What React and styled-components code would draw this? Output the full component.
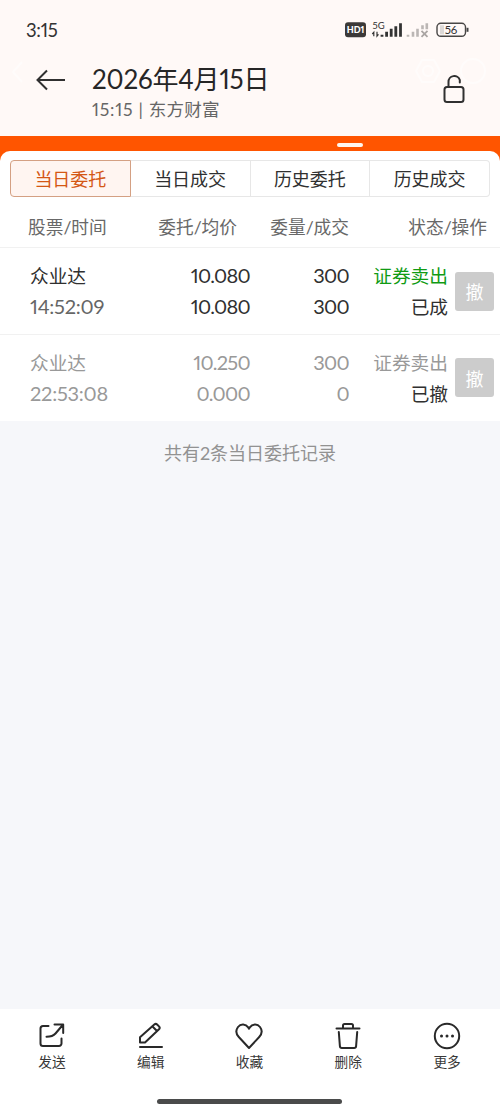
import React from 'react';
import styled, { createGlobalStyle } from 'styled-components';

const Global = createGlobalStyle`
  *{box-sizing:border-box}
  body{margin:0;background:#f6f7fa;font-family:Lato,"Noto Sans CJK SC",sans-serif;color:#303030;font-variant-numeric:proportional-nums}
`;
const Screen = styled.main`
  width:500px;height:1111px;display:flex;flex-direction:column;overflow:hidden;background:#f6f7fa;
`;
const Header = styled.header`
  height:136px;background:#fff9f7;flex:none;position:relative;
`;
const Ghost = styled.svg`position:absolute;left:0;top:0;`;
const Status = styled.div`
  position:relative;height:59px;padding:0 31px 0 26px;display:flex;align-items:center;justify-content:space-between;
`;
const Clock = styled.span`font-size:18.5px;line-height:20px;letter-spacing:-.3px;color:#333;`;
const TitleBar = styled.div`
  position:relative;height:77px;padding:4px 33px 0 36px;display:flex;align-items:flex-start;
`;
const BackIcon = styled.svg`margin-top:6px;flex:none;`;
const LockIcon = styled.svg`margin:11px 0 0 auto;flex:none;`;
const Titles = styled.div`margin-left:26px;white-space:nowrap;`;
const Title = styled.h1`
  margin:0;font-size:26px;line-height:32px;font-weight:400;letter-spacing:-.2px;color:#262626;
`;
const Subtitle = styled.div`font-size:17.6px;line-height:29px;letter-spacing:.1px;color:#666;`;
const SubtitleTime = styled.span`letter-spacing:.75px;`;
const Orange = styled.div`
  background:#ff5500;flex:none;height:15px;display:flex;justify-content:center;padding:7px 0 0 200px;
`;
const Indicator = styled.i`width:26px;height:4px;border-radius:2px;background:#fff7f0;`;
const SheetEdge = styled.div`background:linear-gradient(#ff5500 20px,#fff 20px);flex:none;`;
const Sheet = styled.section`background:#fff;border-radius:10px 10px 0 0;height:270px;padding-top:9px;`;
const Tabs = styled.nav`display:flex;margin:0 10px;height:37px;`;
const Tab = styled.button`
  flex:1;margin:0;padding:0;font:400 18px/34px Lato,"Noto Sans CJK SC",sans-serif;
  color:${p => p.$active ? '#d45714' : '#303030'};
  background:${p => p.$active ? '#fff5f1' : '#fff'};
  border:1px solid ${p => p.$active ? '#d4a083' : '#e7e7e7'};
  border-left-width:${p => p.$active ? '1px' : '0'};
  &:first-child{border-radius:4px 0 0 4px}
  &:last-child{border-radius:0 4px 4px 0}
`;
const TableHead = styled.div`
  display:grid;grid-template-columns:108px 129px 112px 138px;height:51px;
  border-bottom:1px solid #f1f1f1;font-size:17.7px;line-height:62px;color:#686868;text-align:right;
  span:first-child{text-align:left;padding-left:28px}
`;
const Order = styled.article`
  height:${p => p.$last ? '86px' : '87px'};display:grid;grid-template-columns:130px 120px 99px 99px 46px;align-items:center;
  border-bottom:1px solid ${p => p.$last ? '#fff' : '#f1f1f1'};
  color:${p => p.$muted ? '#999' : '#303030'};
`;
const Cell = styled.div`
  display:flex;flex-direction:column;text-align:${p => p.$left ? 'left' : 'right'};
  padding:${p => (p.$num ? 0 : 1) + (p.$muted ? 1 : 0)}px 0 0 ${p => p.$left ? '30px' : '0'};
  font-size:${p => p.$num ? '20px' : '18.7px'};letter-spacing:${p => p.$num ? '-.7px' : '0'};white-space:nowrap;
`;
const Line = styled.span`
  height:31px;line-height:31px;color:${p => p.$color || 'inherit'};
`;
const Time = styled(Line)`
  font-size:20px;line-height:29px;letter-spacing:-.25px;
`;
const Cancel = styled.button`
  border:0;padding:0;margin-left:7px;width:39px;height:39px;border-radius:3px;background:#ccc;color:#fff;
  font:400 18px/38px "Noto Sans CJK SC",sans-serif;
`;
const Summary = styled.p`
  margin:0;padding-top:18px;flex:1;text-align:center;font-size:18px;line-height:28px;color:#929292;
`;
const Footer = styled.footer`height:102px;background:#fff;flex:none;display:flex;flex-direction:column;align-items:center;padding-right:1px;`;
const Actions = styled.div`height:90px;width:494px;display:flex;`;
const Action = styled.div`
  flex:1;display:flex;flex-direction:column;align-items:center;padding-top:12px;font-size:13.7px;line-height:20px;color:#383838;
  svg{margin-bottom:1px}
`;
const HomeBar = styled.i`width:185px;height:5px;border-radius:3px;background:#4a4b4b;`;

const StatusIcons = () => (
  <svg width="126" height="22" viewBox="343 18.7 126 22" fontFamily="Lato, sans-serif">
    <rect x="345" y="22" width="21" height="15" rx="3" fill="#3b3938" />
    <text x="355.5" y="33" fontSize="9" fontWeight="900" fill="#fff" textAnchor="middle">HD1</text>
    <text x="372.5" y="28.3" fontSize="9.5" fill="#333">5G</text>
    <path d="M373.8 36v-4l-1.5 1.7M377 31.5v4.3l1.5-1.7" stroke="#333" strokeWidth="1.2" fill="none" />
    <path d="M382 36.5v-2M386.6 36.5v-5M391.2 36.5v-8M395.8 36.5v-10.5M400.5 36.5v-13.5" stroke="#333" strokeWidth="2.8" />
    <path d="M408 36.5v-2M413 36.5v-5M417.5 36.5v-8M422.5 29v-4M426.8 29v-6" stroke="#bbb6b4" strokeWidth="2.6" />
    <path d="m421.5 30.5 6 6m0-6-6 6" stroke="#aaa5a3" strokeWidth="1.8" />
    <rect x="437" y="23" width="28.5" height="13" rx="3.8" fill="none" stroke="#484645" strokeWidth="1.4" />
    <path d="M440 25h4v9h-4z" fill="#ddd9d7" />
    <path d="M467.5 27.5v4" stroke="#444" strokeWidth="2" />
    <text x="451" y="33.5" fontSize="11.5" fill="#333" textAnchor="middle">56</text>
  </svg>
);
const icons = {
  send: <><path d="M10.500 4H5a2.500 2.500 0 0 0-2.500 2.500v15A2.500 2.500 0 0 0 5 24h16a2.500 2.500 0 0 0 2.500-2.500v-5" /><path d="M16.500 2.500H25.200v8.500M24.700 3 17.500 11.500c-2.200 2.500-4.500 3.200-9 3.200" /></>,
  edit: <><path d="M3 20.500v-5.200L17.300 2.500c.9-.8 2-.8 2.800 0l1.900 1.900c.8.8.8 2 0 2.800L8 20.500zM15.500 4.500l4.500 4.500M3 25h22" /></>,
  heart: <path d="M14 26 3.800 15C1 12 .8 8 3 5c2.700-3.500 7.800-3.100 10.200.4l.8 1.200.8-1.200C17.200 1.900 22.300 1.500 25 5c2.200 3 2 7-.8 10z" />,
  trash: <><path d="M2.500 6.500h23M9 6V3.500C9 2.500 9.500 2 10.500 2h7C18.500 2 19 2.500 19 3.500V6M4.800 10l1.100 14.200c.1 1.300.7 1.800 1.900 1.800h12.400c1.200 0 1.800-.5 1.900-1.800L23.200 10" /></>,
  more: <><circle cx="14" cy="14" r="12.2" /><path strokeWidth="3" d="M8.500 14h.01M14 14h.01M19.500 14h.01" /></>
};
const actions = [['send','发送'],['edit','编辑'],['heart','收藏'],['trash','删除'],['more','更多']];
const orders = [
  {name:'众业达',time:'14:52:09',price:'10.080',avg:'10.080',qty:'300',done:'300',state:'已成',color:'#109b14'},
  {name:'众业达',time:'22:53:08',price:'10.250',avg:'0.000',qty:'300',done:'0',state:'已撤',muted:true}
];

export default function App() {
  return <><Global /><Screen>
    <Header>
      <Ghost width="500" height="136" fill="none" stroke="#fffcfb" strokeWidth="2">
        <path d="m22 62-9 10 9 10" />
        <path d="m422 60 12 0 6 11-6 11h-12l-6-11z" /><circle cx="428" cy="71" r="5" />
        <circle cx="473" cy="71" r="12" />
      </Ghost>
      <Status><Clock>3:15</Clock><StatusIcons /></Status>
      <TitleBar>
        <BackIcon width="30" height="24" fill="none" stroke="#303030" strokeWidth="2"><path d="M29 11H2M11 1.5 1.5 11 11 20.5" /></BackIcon>
        <Titles><Title>2026年4月15日</Title><Subtitle><SubtitleTime>15:15 | </SubtitleTime>东方财富</Subtitle></Titles>
        <LockIcon width="26" height="32" fill="none" stroke="#303030" strokeWidth="2" strokeLinecap="round"><rect x="3.5" y="13" width="19" height="15" rx="2.5" /><path d="M7.500 12.500V8a5.800 5.800 0 0 1 11.300-2V8.500" /></LockIcon>
      </TitleBar>
    </Header>
    <Orange><Indicator /></Orange>
    <SheetEdge><Sheet>
      <Tabs>{['当日委托','当日成交','历史委托','历史成交'].map((t,i)=><Tab key={t} $active={i===0}>{t}</Tab>)}</Tabs>
      <TableHead>{['股票/时间','委托/均价','委量/成交','状态/操作'].map(t=><span key={t}>{t}</span>)}</TableHead>
      {orders.map((o,i)=><Order key={o.time} $muted={o.muted} $last={i===1}>
        <Cell $left $muted={o.muted}><Line>{o.name}</Line><Time $color={o.muted?undefined:'#666'}>{o.time}</Time></Cell>
        <Cell $num $muted={o.muted}><Line>{o.price}</Line><Line>{o.avg}</Line></Cell>
        <Cell $num $muted={o.muted}><Line>{o.qty}</Line><Line>{o.done}</Line></Cell>
        <Cell $muted={o.muted}><Line $color={o.color}>证券卖出</Line><Line $color="#303030">{o.state}</Line></Cell>
        <Cancel>撤</Cancel>
      </Order>)}
    </Sheet></SheetEdge>
    <Summary>共有2条当日委托记录</Summary>
    <Footer>
      <Actions>{actions.map(([k,t])=><Action key={k}><svg width="30" height="30" viewBox="-1 -1 30 30" fill="none" stroke="#292929" strokeWidth="2" strokeLinecap="round" strokeLinejoin="round">{icons[k]}</svg>{t}</Action>)}</Actions>
      <HomeBar />
    </Footer>
  </Screen></>;
}
